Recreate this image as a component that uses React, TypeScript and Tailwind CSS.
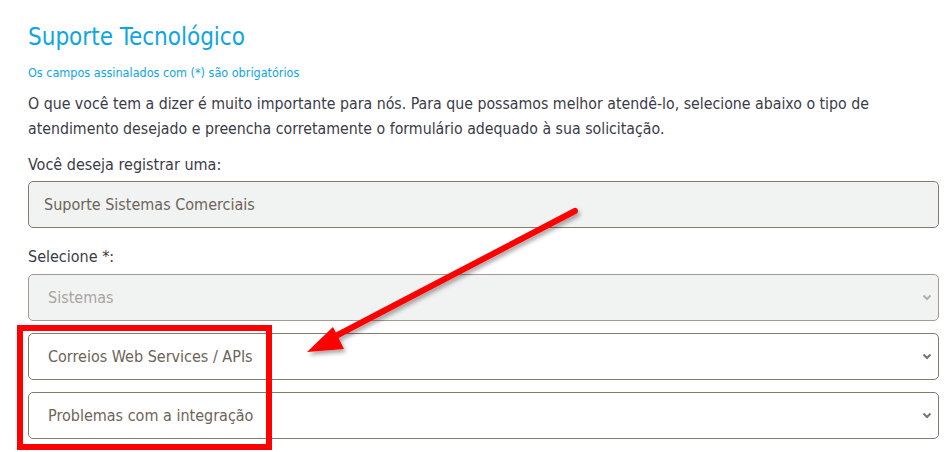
import React from 'react';

const font = { fontFamily: '"DejaVu Sans Condensed", "DejaVu Sans", sans-serif' };

const Chevron: React.FC<{ className?: string }> = ({ className = 'text-[#8a8178]' }) => (
  <svg width="10" height="7" viewBox="0 0 10 7" className={className}>
    <path d="M1.5 1.5 L5 5 L8.5 1.5" fill="none" stroke="currentColor" strokeWidth="2" />
  </svg>
);

interface SelectBoxProps {
  value: string;
  disabled?: boolean;
}

const SelectBox: React.FC<SelectBoxProps> = ({ value, disabled }) => (
  <div
    className={`flex items-center justify-between h-[47px] pl-[19px] pr-[6px] rounded-[5px] border ${
      disabled ? 'bg-[#f1f3f3] border-[#a39b92] text-[#aaa49d]' : 'bg-white border-[#857a6e] text-[#6e6358]'
    }`}
  >
    <span className="text-[16px]">{value}</span>
    <Chevron className={disabled ? 'text-[#b5aea6]' : 'text-[#7d7268]'} />
  </div>
);

export default function App() {
  return (
    <div className="relative w-[949px] h-[452px] bg-white overflow-hidden" style={font}>
      <div className="pl-[28px] pr-[10px] pt-[21px]">
        <h1 className="text-[24px] leading-[32px] text-[#0ea5e4]">Suporte Tecnológico</h1>
        <p className="mt-[12px] text-[12.5px] leading-[16px] text-[#0ea5e4]">Os campos assinalados com (*) são obrigatórios</p>
        <p className="mt-[10px] text-[15.75px] leading-[25px] text-[#3b3b48]">
          O que você tem a dizer é muito importante para nós. Para que possamos melhor atendê-lo, selecione abaixo o tipo de
          atendimento desejado e preencha corretamente o formulário adequado à sua solicitação.
        </p>
        <label className="block mt-[14px] text-[16px] leading-[20px] text-[#3b3b48]">Você deseja registrar uma:</label>
        <div className="mt-[6px] flex items-center h-[47px] px-[15px] rounded-[5px] border border-[#857a6e] bg-[#f1f3f3] text-[#6e6358] text-[16px]">
          Suporte Sistemas Comerciais
        </div>
        <label className="block mt-[19px] text-[16px] leading-[20px] text-[#3b3b48]">Selecione *:</label>
        <div className="mt-[7px] flex flex-col gap-[12px]">
          <SelectBox value="Sistemas" disabled />
          <SelectBox value="Correios Web Services / APIs" />
          <SelectBox value="Problemas com a integração" />
        </div>
      </div>

      {/* annotation overlay */}
      <div className="absolute left-[17px] top-[325px] w-[255px] h-[125px] border-[6px] border-[#ff0000]" />
      <svg className="absolute left-0 top-0 pointer-events-none" width="949" height="452">
        <defs>
          <filter id="sh" x="-10%" y="-10%" width="130%" height="130%">
            <feDropShadow dx="2" dy="3" stdDeviation="2" floodColor="#000" floodOpacity="0.35" />
          </filter>
        </defs>
        <g filter="url(#sh)">
          <line x1="575" y1="211" x2="330" y2="339" stroke="#ff0000" strokeWidth="6" strokeLinecap="round" />
          <polygon points="307,352 333,327 344,349" fill="#ff0000" />
        </g>
      </svg>
    </div>
  );
}
